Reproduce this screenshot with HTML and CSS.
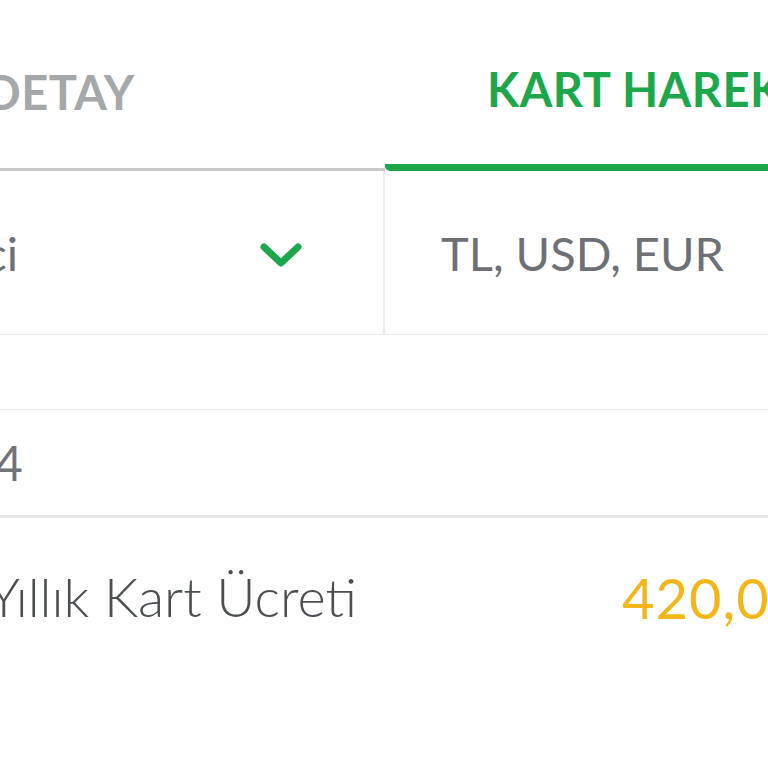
FILE: index.html
```html
<!DOCTYPE html>
<html lang="tr">
<head>
    <meta charset="UTF-8">
    <meta name="viewport" content="width=device-width, initial-scale=1.0">
    <title>Kart Hareketleri</title>
    <link rel="stylesheet" href="styles.css">
</head>
<body>

<div class="screen">
    <div class="tabs">
        <div class="tab">KART DETAY</div>
        <div class="tab active">KART HAREKETLERİ</div>
    </div>

    <div class="filters">
        <div class="filter select">
            <span class="filter-label">Dönem Seçici</span>
            <svg class="chevron" width="44" height="30" viewBox="0 0 44 30">
                <path d="M5 6 L22 22 L39 6" fill="none" stroke="#1ea64b" stroke-width="7" stroke-linecap="round" stroke-linejoin="round"/>
            </svg>
        </div>
        <div class="filter currency">TL, USD, EUR</div>
    </div>

    <div class="row spacer"></div>

    <div class="row card-no">
        <span class="lead">5421 **** **** 1234</span>
    </div>

    <div class="row item">
        <span class="lead item-name">Yıllık Kart Ücreti</span>
        <span class="amount">420,00 TL</span>
    </div>
</div>

</body>
</html>
```

FILE: styles.css
```css
* {
    margin: 0;
    padding: 0;
    box-sizing: border-box;
}

body {
    background: #ffffff;
    overflow: hidden;
    font-family: Lato, "Noto Sans", sans-serif;
}

.screen {
    width: 1560px;
    margin-left: -400px;
}

.tabs {
    display: flex;
    height: 171px;
}

.tab {
    display: flex;
    justify-content: center;
    width: 785px;
    padding-top: 64px;
    font-size: 47px;
    font-weight: bold;
    color: #a6a7a9;
    letter-spacing: 0.5px;
    white-space: nowrap;
    border-bottom: 3px solid #c9c9c9;
}

.tab.active {
    width: 775px;
    justify-content: flex-start;
    padding-left: 102px;
    padding-top: 61px;
    color: #1ca74b;
    border-bottom: 7px solid #1ca74b;
    border-bottom-left-radius: 5px;
}

.filters {
    display: flex;
    height: 164px;
    border-bottom: 1px solid #ececec;
}

.filter {
    display: flex;
    align-items: center;
    font-size: 47px;
    color: #6e7075;
    white-space: nowrap;
}

.filter.select {
    width: 785px;
    justify-content: flex-end;
    gap: 241px;
    padding-right: 80px;
    border-right: 2px solid #ececec;
}

.chevron {
    display: block;
    margin-top: 6px;
}

.filter.currency {
    width: 775px;
    padding-left: 56px;
}

.row {
    display: flex;
    align-items: center;
    border-bottom: 1px solid #ececec;
    white-space: nowrap;
}

.spacer {
    height: 75px;
}

.card-no {
    height: 108px;
    border-bottom: 3px solid #e6e6e6;
    font-size: 48px;
    color: #707276;
}

.lead {
    flex: none;
    text-align: right;
    width: 422px;
}

.item {
    height: 160px;
    border-bottom: none;
    align-items: flex-start;
    padding-top: 46px;
}

.item-name {
    width: 757px;
    font-size: 54px;
    font-weight: 300;
    color: #4b4f54;
}

.amount {
    margin-left: 265px;
    font-size: 56px;
    letter-spacing: 1px;
    color: #f4b516;
}
```
